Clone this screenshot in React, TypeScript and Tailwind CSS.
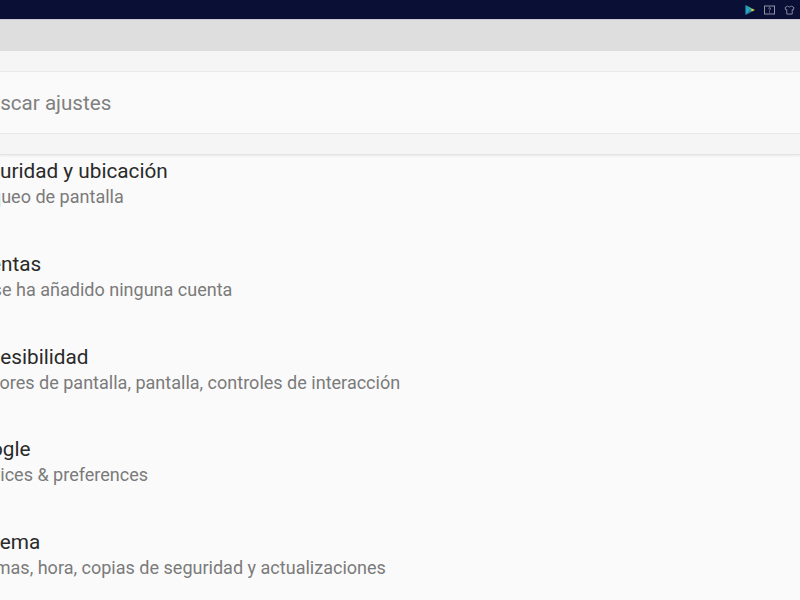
const settings = [
  { title: "Seguridad y ubicación", summary: "Bloqueo de pantalla" },
  { title: "Cuentas", summary: "No se ha añadido ninguna cuenta" },
  { title: "Accesibilidad", summary: "Lectores de pantalla, pantalla, controles de interacción" },
  { title: "Google", summary: "Services & preferences" },
  { title: "Sistema", summary: "Idiomas, hora, copias de seguridad y actualizaciones" },
];

function StatusIcons() {
  return (
    <div className="flex items-center gap-[9px] pr-[5px]">
      <svg width="10" height="10" viewBox="0 0 10 10">
        <path d="M0.5 0 L5.5 5 L0.5 10 Z" fill="#22a7c9" />
        <path d="M0.5 0 L7 3.5 L5.5 5 Z" fill="#3cc29a" />
        <path d="M0.5 10 L7 6.5 L5.5 5 Z" fill="#2f8fa8" />
        <path d="M7 3.5 L10 5 L7 6.5 L5.5 5 Z" fill="#d8c94a" />
      </svg>
      <svg width="11" height="10" viewBox="0 0 11 10" fill="none" stroke="#8f93a3" strokeWidth="1">
        <rect x="0.5" y="1" width="10" height="8" />
        <path d="M4.5 3.5 C4.5 2.5 6.5 2.5 6.5 3.5 C6.5 4.5 5.5 4.5 5.5 5.5 M5.5 6.5 V7.5" />
      </svg>
      <svg width="11" height="10" viewBox="0 0 12 11" fill="none" stroke="#8f93a3" strokeWidth="1">
        <path d="M4 1 L1 3 L2 5.5 L3 5 V10 H9 V5 L10 5.5 L11 3 L8 1 C7.5 2.5 4.5 2.5 4 1 Z" />
      </svg>
    </div>
  );
}

export default function App() {
  return (
    <div className="w-[800px] h-[600px] overflow-hidden bg-[#fafafa] font-['Roboto',sans-serif]">
      <div className="h-[20px] bg-[#0a0f36] border-b border-[#c9c9d2] flex items-center justify-end">
        <StatusIcons />
      </div>
      <div className="h-[31px] bg-[#dedede]" />
      <div className="bg-[#f5f5f5] pt-[20px] pb-[20px] border-b border-[#e4e4e4] shadow-[0_1px_2px_rgba(0,0,0,0.08)]">
        <div className="h-[63px] bg-[#fafafa] border-y border-[#e9e9e9] flex items-center">
          <span className="ml-[-24px] pt-[2px] text-[20.6px] text-[#808080] whitespace-nowrap">Buscar ajustes</span>
        </div>
      </div>
      <div className="ml-[-35px] pt-[3px] flex flex-col gap-[40.75px]">
        {settings.map((item) => (
          <div key={item.title} className="h-[52px] whitespace-nowrap">
            <div className="text-[20.75px] leading-[26px] text-[#2a2a2a]">{item.title}</div>
            <div className="text-[18.05px] leading-[26px] text-[#7b7b7b]">{item.summary}</div>
          </div>
        ))}
      </div>
    </div>
  );
}
